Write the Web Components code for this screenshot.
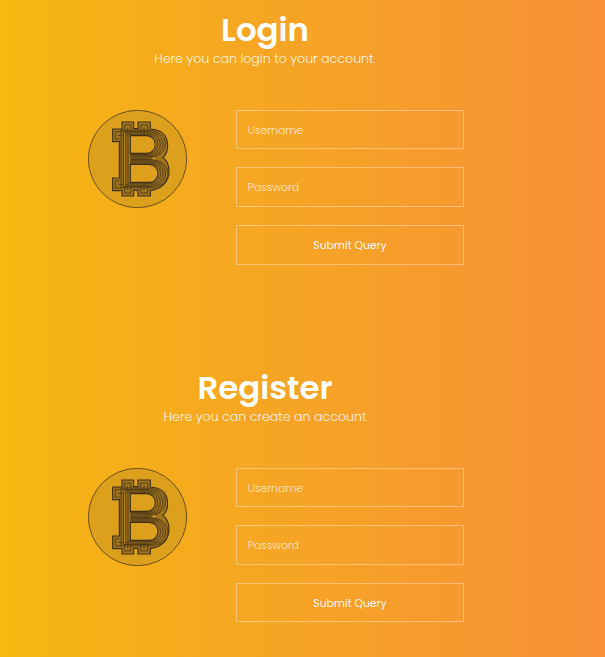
<!DOCTYPE html>
<html lang="en"><head><meta charset="utf-8"><title>Login and Register</title>
<style>
html,body{margin:0;height:100%;overflow:hidden}
body{font-family:Poppins,Inter,sans-serif;color:#fff;background:linear-gradient(90deg,#f5b90f 0%,#f5b017 16%,#f6a91f 34%,#f6a326 51%,#f69c2c 68%,#f79732 84%,#f89037 100%)}
</style></head><body>
<account-page></account-page>
<script>
const define = (name, html, setup) => customElements.define(name, class extends HTMLElement {
  connectedCallback() {
    if (this.shadowRoot) return;
    this.attachShadow({mode: 'open'}).innerHTML = html;
    if (setup) setup(this, this.shadowRoot);
  }
});

const B = 'M98 87H126V66H161V86H174V66H211V87C244 89 263 107 263 138C263 154 257 165 249 173C261 182 267 194 267 213C267 244 247 268 211 271V288H174V271H161V288H126V272H98V234H118V125H98Z';
const HOLES = 'M151 107H199C235 107 235 160 199 160H151ZM151 193H207C243 193 243 247 207 247H151Z';
// Engraved lines: rings that widen round each counter of the letter.
const engraving = [1, 2, 3, 4].map(k => {
  const l = 151 - 7 * k, o = 4.2 * k, m = 3.6 * k, r = 10 * k;
  return `M${l} 176V${107-o}H199C${235+r} ${107-o} ${235+r} ${160+m} 199 ${160+m}H151M151 ${193-m}H207C${243+r} ${193-m} ${243+r} ${247+o} 207 ${247+o}H${l}V176`;
}).join('');
// Nested lines in the four tabs and the two arms.
const tabs = 'M134 98V75H153V98M143 104V83M182 98V75H203V98M192 104V83'
  + 'M134 256V279H153V256M143 250V271M182 256V279H203V256M192 250V271'
  + 'M126 95H106V117H118M140 106H114M126 264H106V242H118M140 253H114';
define('coin-logo', `<style>:host{display:block;width:100px;height:100px}svg{display:block}</style>
<svg width="100" height="100" viewBox="21 30 300 300" fill="none">
<defs><clipPath id="b"><path clip-rule="evenodd" d="${B}${HOLES}"/></clipPath></defs>
<ellipse cx="172.5" cy="177" rx="147.5" ry="146" fill="#dda01d" stroke="#69501d" stroke-width="3"/>
<g clip-path="url(#b)"><path d="${B}" fill="#a0751c"/><path d="${engraving}" stroke="#46331a" stroke-width="2.6"/>
<path d="${tabs}" stroke="#51391a" stroke-width="2.5"/>
<path d="M134 98V258" stroke="#bd891e" stroke-width="2.5"/></g>
<path d="${B}${HOLES}" stroke="#3f2f1a" stroke-width="3.4"/>
<path d="M222 171V179M217 175H227" stroke="#e1a323" stroke-width="3"/></svg>`);

define('outlined-box', `<style>:host{display:flex;align-items:flex-start;box-sizing:border-box;border:1px solid #ffffff5c;padding:1px 0 0 10.8px;color:#ffffffc8;font-size:10.8px;line-height:37px;font-weight:300}
:host([action]){padding:1px 0 0;justify-content:center;color:#fffffff5;font-weight:400}</style><slot></slot>`);

define('account-section', `<style>
:host{display:flex;flex-direction:column;height:358px;width:530px}
header{height:110px;display:flex;flex-direction:column;align-items:center}
main{display:flex;padding-left:87px;gap:49px}
form{display:grid;width:228px;gap:18px;margin:0}
</style><header><slot name="title"></slot><slot name="sub"></slot></header>
<main><coin-logo></coin-logo><form>
<outlined-box>Username</outlined-box>
<outlined-box>Password</outlined-box>
<outlined-box action>Submit Query</outlined-box>
</form></main>`, (host, root) => {
  root.querySelector('form').style.gridTemplateRows = host.getAttribute('rows');
});

define('account-page', `<style>:host{display:block;height:657px;overflow:hidden}
h1,p{margin:0}h1{font-size:32.4px;line-height:40px;padding-top:10px;height:39px;font-weight:600}p{font-size:12.6px;line-height:20px;font-weight:300;color:#ffffffe6}</style>
<account-section rows="39px 40px 40px">
<h1 slot="title">Login</h1>
<p slot="sub">Here you can login to your account.</p>
</account-section>
<account-section rows="39px 40px 39px" style="height:299px">
<h1 slot="title">Register</h1>
<p slot="sub">Here you can create an account</p>
</account-section>`);
</script></body></html>
